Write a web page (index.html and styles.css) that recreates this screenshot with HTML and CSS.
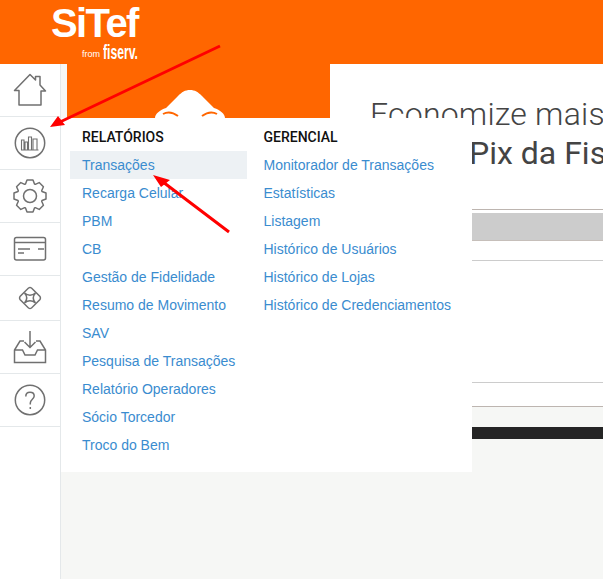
FILE: index.html
```html
<!DOCTYPE html>
<html lang="pt-BR">
<head>
    <meta charset="UTF-8">
    <meta name="viewport" content="width=device-width, initial-scale=1.0">
    <title>SiTef</title>
    <link rel="stylesheet" href="styles.css">
</head>
<body>
<div class="page">

    <!-- Top bar -->
    <header class="topbar">
        <div class="logo">
            <span class="logo-name">SiTef</span>
            <span class="logo-sub"><span class="logo-from">from</span><span class="logo-fiserv">fiserv.</span></span>
        </div>
    </header>

    <div class="layout">

        <!-- Side menu -->
        <nav class="sidebar">
            <a class="side-item">
                <svg width="34" height="34" viewBox="0 0 34 34" class="side-icon"><path d="M6 32 H28 V18 H32.500 L27 12 V3.500 H22.500 V7 L17 1.500 1.500 17.500 H6 Z" stroke-linejoin="round"/></svg>
            </a>
            <a class="side-item">
                <svg width="32" height="32" viewBox="0 0 32 32" class="side-icon"><circle cx="16" cy="16" r="14.700"/><path d="M7 23 H24.500 M7.500 23 V13 H10 V23 M11 23 V15 H13.500 V23 M14.500 23 V10 H17.500 V23 M19 23 V12 H23 V23" stroke-width="1.100"/></svg>
            </a>
            <a class="side-item">
                <svg width="34" height="34" viewBox="-17 -17 34 34" class="side-icon"><circle r="6.500"/><path d="M-4.500 -12 L-3 -16 H3 L4.500 -12 L5.300 -11.670 L9.190 -13.440 L13.440 -9.190 L11.670 -5.300 L12 -4.500 L16 -3 V3 L12 4.500 L11.670 5.300 L13.440 9.190 L9.190 13.440 L5.300 11.670 L4.500 12 L3 16 H-3 L-4.500 12 L-5.300 11.670 L-9.190 13.440 L-13.440 9.190 L-11.670 5.300 L-12 4.500 L-16 3 V-3 L-12 -4.500 L-11.670 -5.300 L-13.440 -9.190 L-9.190 -13.440 L-5.300 -11.670 Z" stroke-linejoin="round"/></svg>
            </a>
            <a class="side-item">
                <svg width="34" height="26" viewBox="0 0 34 26" class="side-icon"><rect x="1.500" y="1.500" width="31" height="22.500" rx="2"/><path d="M1.500 6.500 H32.500"/><path d="M5 13 H17 M5 17 H11 M25 13 H31"/></svg>
            </a>
            <a class="side-item side-item-short">
                <svg width="24" height="24" viewBox="0 0 24 24" class="side-icon"><path d="M10.500 2 Q12 1 13.500 2 L22 10.500 Q23 12 22 13.500 L13.500 22 Q12 23 10.500 22 L2 13.500 Q1 12 2 10.500 Z"/><path d="M6.500 7 Q12 11.500 17.500 7 M6.500 17 Q12 12.500 17.500 17 M6.500 7 Q11 12 6.500 17 M17.500 7 Q13 12 17.500 17"/></svg>
            </a>
            <a class="side-item">
                <svg width="34" height="34" viewBox="0 0 34 34" class="side-icon"><path d="M17 1 V17.500 M11.500 12 17 17.500 22.500 12 M11 11 H7 L1.500 20 V32.500 H32.500 V20 L27 11 H23 M1.500 20 H9.500 L12 25 H22 L24.500 20 H32.500"/></svg>
            </a>
            <a class="side-item">
                <svg width="32" height="32" viewBox="0 0 32 32" class="side-icon"><circle cx="16" cy="16" r="14.700"/><path d="M11.800 12.500 C11.800 9.500 13.800 8.300 16 8.300 C18.400 8.300 20.200 9.800 20.200 12 C20.200 15 16.300 15.500 16.300 19 V20.500 M16.300 23 V25"/></svg>
            </a>
        </nav>

        <main class="content">
            <section class="banner">
                <div class="banner-promo">
                    <svg width="70" height="28" viewBox="0 0 70 28" class="promo-shape">
                        <path d="M35 0 C40 0 43 2 47 6 L59 18 C65 20 70 24 70 28 H0 C0 24 5 20 11 18 L23 6 C27 2 30 0 35 0 Z" fill="#fff"/>
                        <path d="M8 24 Q15 20 23 26 M62 24 Q55 20 47 26" fill="none" stroke="#ff6600" stroke-width="2"/>
                    </svg>
                </div>
                <div class="banner-copy">
                    <h1 class="promo-title">Economize mais</h1>
                    <h2 class="promo-subtitle">Pix da Fis</h2>
                    <div class="promo-table">
                        <div class="table-head"></div>
                        <div class="table-row"></div>
                        <div class="table-row table-row-tall"></div>
                    </div>
                </div>
            </section>
            <div class="dark-bar"></div>
        </main>
    </div>

    <!-- Open submenu -->
    <div class="submenu">
        <ul class="submenu-col">
            <li class="submenu-title">RELATÓRIOS</li>
            <li><a class="submenu-link submenu-link-active">Transações</a></li>
            <li><a class="submenu-link">Recarga Celular</a></li>
            <li><a class="submenu-link">PBM</a></li>
            <li><a class="submenu-link">CB</a></li>
            <li><a class="submenu-link">Gestão de Fidelidade</a></li>
            <li><a class="submenu-link">Resumo de Movimento</a></li>
            <li><a class="submenu-link">SAV</a></li>
            <li><a class="submenu-link">Pesquisa de Transações</a></li>
            <li><a class="submenu-link">Relatório Operadores</a></li>
            <li><a class="submenu-link">Sócio Torcedor</a></li>
            <li><a class="submenu-link">Troco do Bem</a></li>
        </ul>
        <ul class="submenu-col">
            <li class="submenu-title">GERENCIAL</li>
            <li><a class="submenu-link">Monitorador de Transações</a></li>
            <li><a class="submenu-link">Estatísticas</a></li>
            <li><a class="submenu-link">Listagem</a></li>
            <li><a class="submenu-link">Histórico de Usuários</a></li>
            <li><a class="submenu-link">Histórico de Lojas</a></li>
            <li><a class="submenu-link">Histórico de Credenciamentos</a></li>
        </ul>
    </div>

    <!-- Red arrows drawn over the screenshot -->
    <svg class="arrows" width="603" height="579" viewBox="0 0 603 579">
        <path d="M220 46 L60 122 M229 232 L163 182" fill="none" stroke="#f00" stroke-width="3"/>
        <path d="M50 127 L58 116 L65 125 Z M153 175 L170 180 L161 187 Z" fill="#f00"/>
    </svg>
</div>
</body>
</html>
```

FILE: styles.css
```css
body {
    font-family: 'Liberation Sans', Arial, sans-serif;
    background-color: #f6f7f5;
    margin: 0;
}

.page {
    position: relative;
    width: 603px;
    height: 579px;
    overflow: hidden;
}

.topbar {
    background-color: #ff6600;
    height: 64px;
    padding-left: 51px;
    box-sizing: border-box;
}

.logo {
    color: #fff;
    width: 88px;
    display: flex;
    flex-direction: column;
    align-items: flex-end;
}

.logo-name {
    font-size: 40px;
    font-weight: bold;
    letter-spacing: -1.6px;
    line-height: 34px;
    margin-top: 6px;
    width: 88px;
    white-space: nowrap;
}

.logo-sub {
    display: flex;
    align-items: flex-end;
    gap: 3px;
    height: 16px;
    margin-top: 4px;
}

.logo-from {
    font-size: 9px;
    line-height: 12px;
}

.logo-fiserv {
    font-size: 21px;
    font-weight: bold;
    line-height: 16px;
    width: 36px;
    transform: scaleX(0.58);
    transform-origin: left;
}

.layout {
    display: flex;
    height: 515px;
}

.sidebar {
    background-color: #fff;
    border-right: 1px solid #e4e8ea;
    width: 60px;
    flex-shrink: 0;
}

.side-item {
    display: flex;
    align-items: center;
    justify-content: center;
    height: 52px;
    border-bottom: 1px solid #e4e8ea;
}

.side-item-short {
    height: 44px;
}

.side-icon {
    fill: none;
    stroke: #707070;
    stroke-width: 1.5;
}

.content {
    flex: 1;
    margin-left: 6px;
    min-width: 0;
}

.banner {
    display: flex;
    height: 342px;
    border-bottom: 1px solid #bdb5b0;
}

.banner-promo {
    background-color: #ff6600;
    width: 263px;
    flex-shrink: 0;
    padding: 26px 0 0 88px;
    box-sizing: border-box;
}

.promo-shape {
    display: block;
}

.banner-copy {
    background-color: #fff;
    flex: 1;
    min-width: 0;
    overflow: hidden;
    padding-top: 30px;
}

.promo-title {
    color: #444;
    font-family: Roboto, sans-serif;
    font-size: 32px;
    font-weight: 300;
    letter-spacing: 0.2px;
    line-height: 40px;
    margin: 0 0 0 40px;
    white-space: nowrap;
}

.promo-subtitle {
    color: #444;
    font-family: Roboto, sans-serif;
    font-size: 32px;
    font-weight: 400;
    line-height: 38px;
    margin: 0 0 0 139px;
    white-space: nowrap;
}

.promo-table {
    margin-top: 37px;
    border-top: 1px solid #bdb5b0;
}

.table-head {
    background-color: #ccc;
    height: 27px;
    margin-top: 3px;
    border-bottom: 1px solid #c6bfba;
}

.table-row {
    height: 19px;
    border-bottom: 1px solid #ccc;
}

.table-row-tall {
    height: 121px;
}

.dark-bar {
    background-color: #252525;
    height: 12px;
    margin-top: 20px;
}

.submenu {
    position: absolute;
    left: 61px;
    top: 118px;
    width: 411px;
    height: 354px;
    background-color: #fff;
    display: flex;
    gap: 4.5px;
    padding: 5px 0 0 9px;
    box-sizing: border-box;
}

.submenu-col {
    list-style: none;
    margin: 0;
    padding: 0;
    width: 177px;
    flex-shrink: 0;
}

.submenu-col:last-child {
    width: 220px;
}

.submenu-title {
    color: #111;
    font-family: Roboto, sans-serif;
    font-size: 14px;
    font-weight: 500;
    line-height: 28px;
    padding-left: 12px;
}

.submenu-link {
    display: block;
    color: #3a8ccf;
    font-size: 14px;
    line-height: 28px;
    padding-left: 12px;
    white-space: nowrap;
}

.submenu-link-active {
    background-color: #edf1f4;
}

.arrows {
    position: absolute;
    left: 0;
    top: 0;
}
```
